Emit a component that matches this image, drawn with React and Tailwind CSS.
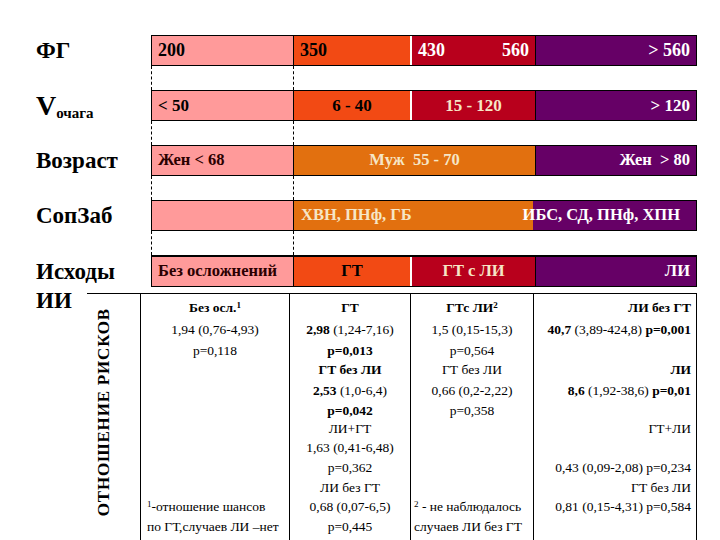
import React from "react";

const F = "[font-family:'Liberation_Serif','Times_New_Roman',serif]";

const H = [
  "h-[22px]",
  "h-[21px]",
  "h-[19px]",
  "h-[21px]",
  "h-[20px]",
  "h-[18px]",
  "h-[19px]",
  "h-[20px]",
  "h-[20px]",
  "h-[19px]",
  "h-[20px]",
  "h-[20px]",
];

function Gap() {
  return (
    <div className="flex h-[24px]">
      <div className="w-[151px] shrink-0" />
      <div className="w-[143px] h-full border-x border-dashed border-black" />
    </div>
  );
}

function Label({ children }) {
  return (
    <div className="w-[151px] shrink-0 pl-[36px] flex items-center text-[23px] font-bold text-black leading-none">
      {children}
    </div>
  );
}

function Col({ lines, className = "" }) {
  return (
    <div className={`pt-[4px] shrink-0 ${className}`}>
      {lines.map((l, i) => (
        <div key={i} className={`${H[i]} leading-[20px] whitespace-nowrap ${l && l.cls ? l.cls : ""}`}>
          {l ? l.c : null}
        </div>
      ))}
    </div>
  );
}

function Sup({ children }) {
  return <sup className="text-[9px]">{children}</sup>;
}

export default function App() {
  const pink = "bg-[#ff9a9a]";
  const ored = "bg-[#f24a14]";
  const crim = "bg-[#b8001c]";
  const purp = "bg-[#660066]";
  const orng = "bg-[#e2700f]";
  const pale = "text-[#f6e6c6]";

  const col1 = [
    { c: <>Без осл.<Sup>1</Sup></>, cls: "font-bold" },
    { c: "1,94 (0,76-4,93)" },
    { c: "p=0,118" },
    null, null, null, null, null, null, null,
    { c: <><Sup>1</Sup>-отношение шансов</>, cls: "text-left pl-[6px]" },
    { c: "по ГТ,случаев ЛИ –нет", cls: "text-left pl-[6px]" },
  ];
  const col2 = [
    { c: "ГТ", cls: "font-bold" },
    { c: <><b>2,98</b> (1,24-7,16)</> },
    { c: "p=0,013", cls: "font-bold" },
    { c: "ГТ без ЛИ", cls: "font-bold" },
    { c: <><b>2,53</b> (1,0-6,4)</> },
    { c: "p=0,042", cls: "font-bold" },
    { c: "ЛИ+ГТ" },
    { c: "1,63 (0,41-6,48)" },
    { c: "p=0,362" },
    { c: "ЛИ без ГТ" },
    { c: "0,68 (0,07-6,5)" },
    { c: "p=0,445" },
  ];
  const col3 = [
    { c: <>ГТс ЛИ<Sup>2</Sup></>, cls: "font-bold" },
    { c: "1,5 (0,15-15,3)" },
    { c: "p=0,564" },
    { c: "ГТ без ЛИ" },
    { c: "0,66 (0,2-2,22)" },
    { c: "p=0,358" },
    null, null, null, null,
    { c: <><Sup>2</Sup> - не наблюдалось</>, cls: "text-left pl-[3px]" },
    { c: "случаев ЛИ без ГТ", cls: "text-left pl-[3px]" },
  ];
  const col4 = [
    { c: "ЛИ без ГТ", cls: "font-bold" },
    { c: <><b>40,7</b> (3,89-424,8) <b>p=0,001</b></> },
    null,
    { c: "ЛИ", cls: "font-bold" },
    { c: <><b>8,6</b> (1,92-38,6) <b>p=0,01</b></> },
    null,
    { c: "ГТ+ЛИ" },
    null,
    { c: "0,43 (0,09-2,08) p=0,234" },
    { c: "ГТ без ЛИ" },
    { c: "0,81 (0,15-4,31) p=0,584" },
    null,
  ];

  return (
    <div className={`w-[720px] h-[540px] overflow-hidden bg-white ${F} text-black`}>
      <div className="h-[35px]" />

      {/* Row 1 */}
      <div className="flex h-[31px]">
        <Label>ФГ</Label>
        <div className="flex w-[546px] shrink-0 border border-black text-[18px] font-bold">
          <div className={`w-[141px] shrink-0 ${pink} flex items-center pl-[6px]`}>200</div>
          <div className={`w-[117px] shrink-0 ${ored} border-l border-black flex items-center pl-[6px]`}>350</div>
          <div className="w-[2px] shrink-0 bg-white" />
          <div className={`w-[123px] shrink-0 ${crim} flex items-center justify-between px-[6px] text-white`}>
            <span>430</span>
            <span>560</span>
          </div>
          <div className={`flex-1 min-w-0 ${purp} border-l border-black flex items-center justify-end pr-[6px] text-white`}>
            &gt;&nbsp;560
          </div>
        </div>
      </div>

      <Gap />

      {/* Row 2 */}
      <div className="flex h-[31px]">
        <div className="w-[151px] shrink-0 pl-[36px] flex items-center font-bold leading-none">
          <span className="text-[28px]">V</span>
          <span className="text-[15px] relative top-[8px]">очага</span>
        </div>
        <div className="flex w-[546px] shrink-0 border border-black text-[17px] font-bold">
          <div className={`w-[141px] shrink-0 ${pink} flex items-center pl-[6px]`}>&lt; 50</div>
          <div className={`w-[117px] shrink-0 ${ored} border-l border-black flex items-center justify-center`}>6 - 40</div>
          <div className="w-[2px] shrink-0 bg-white" />
          <div className={`w-[123px] shrink-0 ${crim} flex items-center justify-center ${pale}`}>15 - 120</div>
          <div className={`flex-1 min-w-0 ${purp} border-l border-black flex items-center justify-end pr-[6px] text-white`}>
            &gt;&nbsp;120
          </div>
        </div>
      </div>

      <Gap />

      {/* Row 3 */}
      <div className="flex h-[31px]">
        <Label>Возраст</Label>
        <div className="flex w-[546px] shrink-0 border border-black text-[16.5px] font-bold">
          <div className={`w-[141px] shrink-0 ${pink} flex items-center pl-[6px] text-[#2a0000]`}>Жен &lt; 68</div>
          <div className={`w-[242px] shrink-0 ${orng} border-l border-black flex items-center justify-center ${pale}`}>
            Муж&nbsp; 55 - 70
          </div>
          <div className={`flex-1 min-w-0 ${purp} border-l border-black flex items-center justify-end pr-[6px] text-white`}>
            Жен &nbsp;&gt; 80
          </div>
        </div>
      </div>

      <Gap />

      {/* Row 4 */}
      <div className="flex h-[31px]">
        <Label>СопЗаб</Label>
        <div className="flex w-[546px] shrink-0 border border-black text-[16.5px] font-bold">
          <div className={`w-[141px] shrink-0 ${pink}`} />
          <div className={`w-[240px] shrink-0 ${orng} border-l border-black flex items-center pl-[7px] whitespace-nowrap ${pale}`}>
            ХВН, ПНф, ГБ
          </div>
          <div className={`flex-1 min-w-0 ${purp} flex items-center justify-end pr-[16px] whitespace-nowrap text-white`}>
            ИБС, СД, ПНф, ХПН
          </div>
        </div>
      </div>

      <Gap />

      {/* Row 5 */}
      <div className="flex h-[32px]">
        <Label>Исходы</Label>
        <div className="flex w-[546px] shrink-0 border border-t-2 border-black text-[16.5px] font-bold">
          <div className={`w-[141px] shrink-0 ${pink} flex items-center pl-[6px] text-[#2a0000]`}>Без осложнений</div>
          <div className={`w-[117px] shrink-0 ${ored} border-l border-black flex items-center justify-center`}>ГТ</div>
          <div className="w-[2px] shrink-0 bg-white" />
          <div className={`w-[123px] shrink-0 ${crim} flex items-center justify-center ${pale}`}>ГТ с ЛИ</div>
          <div className={`flex-1 min-w-0 ${purp} border-l border-black flex items-center justify-end pr-[6px] text-white`}>
            ЛИ
          </div>
        </div>
      </div>

      {/* Table */}
      <div className="flex mt-[6px]">
        <div className="w-[87px] shrink-0 pl-[36px]">
          <div className="-mt-[5px] text-[23px] font-bold leading-[26px]">ИИ</div>
        </div>
        <div className="w-[610px] shrink-0 h-[260px] border-t border-black flex text-[13.5px]">
          <div className="w-[53px] shrink-0 flex items-center justify-start pl-[8px] pb-[22px]">
            <span className="[writing-mode:vertical-rl] rotate-180 text-[17px] font-bold tracking-[0.8px] whitespace-nowrap leading-none">
              ОТНОШЕНИЕ РИСКОВ
            </span>
          </div>
          <Col lines={col1} className="w-[149px] border-l border-black text-center" />
          <Col lines={col2} className="w-[121px] border-l border-black text-center" />
          <Col lines={col3} className="w-[123px] border-l border-black text-center" />
          <Col lines={col4} className="w-[164px] border-x border-black text-right pr-[5px]" />
        </div>
      </div>
    </div>
  );
}
